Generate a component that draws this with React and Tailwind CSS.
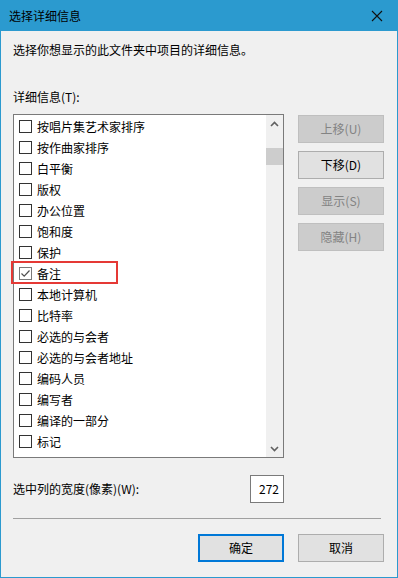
import React from 'react';

const font = { fontFamily: '"Noto Sans CJK SC", "Noto Sans", sans-serif' };

const items = [
  '按唱片集艺术家排序', '按作曲家排序', '白平衡', '版权', '办公位置', '饱和度', '保护',
  '备注', '本地计算机', '比特率', '必选的与会者', '必选的与会者地址', '编码人员',
  '编写者', '编译的一部分', '标记',
];

const Checkbox = ({ checked }) => (
  <div
    className={`w-[13px] h-[13px] bg-white border flex items-center justify-center ${
      checked ? 'border-[#7a7a7a]' : 'border-[#333333]'
    }`}
  >
    {checked && (
      <svg width="11" height="11" viewBox="0 0 11 11">
        <path d="M1.5 5.5 L4.2 8.2 L9.5 2.5" fill="none" stroke="#505050" strokeWidth="1.2" />
      </svg>
    )}
  </div>
);

const SideButton = ({ label, enabled }) => (
  <div
    className={`w-[86px] h-[28px] border flex items-center justify-center text-[12px] ${
      enabled
        ? 'bg-[#e1e1e1] border-[#adadad] text-black'
        : 'bg-[#cccccc] border-[#bfbfbf] text-[#838383]'
    }`}
  >
    {label}
  </div>
);

export default function App() {
  return (
    <div
      style={font}
      className="relative w-[398px] h-[578px] bg-[#f0f0f0] border-l border-r border-b border-[#2b9acf] flex flex-col text-[12px] text-black"
    >
      {/* 标题栏 */}
      <div className="h-[31px] -mx-px bg-[#2b9acf] flex items-center justify-between pl-[9px] pr-[15px]">
        <span className="text-[12px] text-black leading-none">选择详细信息</span>
        <svg width="12" height="12" viewBox="0 0 12 12">
          <path d="M1 1 L11 11 M11 1 L1 11" stroke="#111" strokeWidth="1.1" />
        </svg>
      </div>

      <div className="pl-[12px] pr-[12px] flex flex-col">
        <div className="mt-[11px] h-[16px] leading-[16px]">选择你想显示的此文件夹中项目的详细信息。</div>
        <div className="mt-[31px] h-[16px] leading-[16px]">详细信息(T):</div>

        <div className="mt-[9px] flex items-start gap-[14px]">
          {/* 列表框 */}
          <div className="w-[271px] h-[344px] bg-white border border-[#7a7a7a] flex">
            <div className="flex-1 pt-[1px] overflow-hidden">
              {items.map((t) => (
                <div key={t} className="h-[21px] flex items-center pl-[5px] gap-[5px]">
                  <Checkbox checked={t === '备注'} />
                  <span className="leading-[21px]">{t}</span>
                </div>
              ))}
            </div>
            <div className="w-[17px] h-full bg-[#f0f0f0] flex flex-col items-center justify-between">
              <div className="h-[17px] flex items-center justify-center">
                <svg width="9" height="6" viewBox="0 0 9 6">
                  <path d="M1 5 L4.5 1.5 L8 5" fill="none" stroke="#606060" strokeWidth="1.6" />
                </svg>
              </div>
              <div className="flex-1 w-full">
                <div className="mt-[16px] w-full h-[17px] bg-[#cdcdcd]" />
              </div>
              <div className="h-[17px] flex items-center justify-center">
                <svg width="9" height="6" viewBox="0 0 9 6">
                  <path d="M1 1 L4.5 4.5 L8 1" fill="none" stroke="#606060" strokeWidth="1.6" />
                </svg>
              </div>
            </div>
          </div>

          {/* 右侧按钮 */}
          <div className="pt-[1px] flex flex-col gap-[8px]">
            <SideButton label="上移(U)" />
            <SideButton label="下移(D)" enabled />
            <SideButton label="显示(S)" />
            <SideButton label="隐藏(H)" />
          </div>
        </div>

        <div className="mt-[17px] flex items-center w-[271px] justify-between">
          <span>选中列的宽度(像素)(W):</span>
          <div className="w-[34px] h-[28px] bg-white border border-[#7a7a7a] flex items-center justify-end pr-[4px]">
            272
          </div>
        </div>

        <div className="mt-[15px] w-[368px] h-px bg-[#a0a0a0]" />

        <div className="mt-[15px] flex justify-end gap-[14px] pr-px">
          <div className="w-[86px] h-[28px] bg-[#e1e1e1] border-2 border-[#0078d7] flex items-center justify-center">
            确定
          </div>
          <div className="w-[86px] h-[28px] bg-[#e1e1e1] border border-[#adadad] flex items-center justify-center">
            取消
          </div>
        </div>
      </div>

      {/* 红框标注 */}
      <div className="absolute left-[10px] top-[261px] w-[107px] h-[23px] border-2 border-[#e53935]" />
    </div>
  );
}
